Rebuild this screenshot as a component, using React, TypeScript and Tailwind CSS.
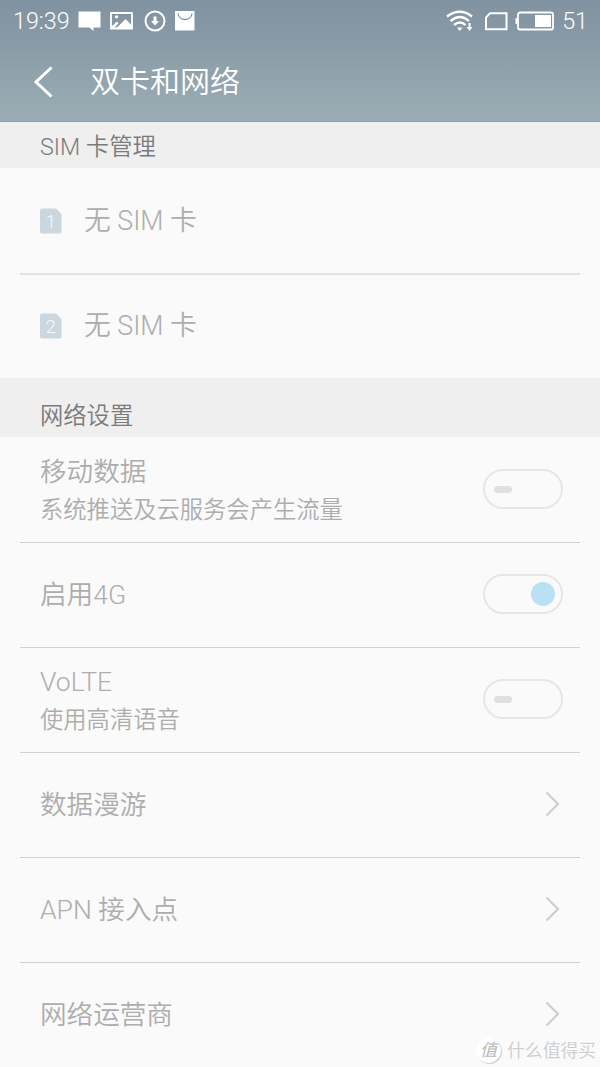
import type { ReactNode } from "react";

function StatusBar() {
  return (
    <div className="flex h-[42px] items-center pl-[13px] pr-[12px] text-[23.3px] text-white">
      <span className="w-[65px] pt-[2px] leading-none">19:39</span>
      <svg className="h-[22px] w-[118px]" viewBox="0 0 118 22" fill="none">
        <path d="M0.500 1.500h22v16h-7v3.500l-4-3.500H.500z" fill="white" />
        <path d="M33 3h21v15.500H33z" stroke="white" strokeWidth="1.800" />
        <path d="M34 16l5-4.500 1.500 1.500-4 5H34zM38.500 18l9-9 6.500 6.500V18z" fill="white" />
        <circle cx="38.500" cy="6.800" r="1.600" fill="white" />
        <circle cx="77" cy="11" r="9.500" stroke="white" strokeWidth="2" />
        <path d="M75.500 6.500h3v4.500h2.500l-4 4.500-4-4.500h2.500z" fill="white" />
        <path d="M97 1h19.500v19.500H97z" fill="white" />
        <path d="M100 3.500c1 8 13 8 14 0" stroke="#84949f" strokeWidth="1.300" />
      </svg>
      <svg className="ml-auto h-[24px] w-[110px]" viewBox="0 0 110 24" fill="none" stroke="white">
        <path d="M2 7.500Q15 -2 27 7.500M5.500 12Q15 4 24 12M9 16Q15 11 20.500 16" strokeWidth="2.300" />
        <path d="M12 18.500h5.500L14.700 22z" fill="white" stroke="none" />
        <path d="M24.500 14v5" strokeWidth="2" />
        <path d="M21.500 18h6l-3 4z" fill="white" stroke="none" />
        <path d="M45 4.200h16.500v16H41V8.700z" strokeWidth="2" />
        <rect x="73" y="3.500" width="35" height="17" rx="2" strokeWidth="1.800" />
        <path d="M71.500 9v6" strokeWidth="2" />
        <path d="M90 6h16v12H90z" fill="white" stroke="none" />
      </svg>
      <span className="ml-[7px] pt-[2px] leading-none">51</span>
    </div>
  );
}

function Header() {
  return (
    <header className="h-[122px] border-b border-[#8d9ea5] bg-linear-to-b from-[#8091a0] to-[#9badb4]">
      <StatusBar />
      <div className="flex h-[79px] items-center pl-[33px]">
        <svg className="h-[32px] w-[20px]" viewBox="0 0 20 32" fill="none">
          <path d="M18.500 1.500L3 16l15.500 14.500" stroke="white" strokeWidth="3" />
        </svg>
        <h1 className="ml-[37px] text-[30px] leading-none font-[350] text-white">双卡和网络</h1>
      </div>
    </header>
  );
}

function SimRow({ slot }: { slot: number }) {
  return (
    <div className="flex h-full items-center pl-5">
      <svg className="h-[26px] w-[22px]" viewBox="0 0 22 26">
        <path d="M2 .5h14L21.500 6v17.500q0 2-2 2H2q-2 0-2-2v-21q0-2 2-2z" fill="#cad7df" />
        <text x="10.800" y="19.500" textAnchor="middle" fontSize="18" fill="#fafafa">
          {slot}
        </text>
      </svg>
      <span className="ml-[22px] pt-px text-[26.8px] leading-none">无 SIM 卡</span>
    </div>
  );
}

function Toggle({ on = false }: { on?: boolean }) {
  return (
    <div
      className={`flex h-10 w-20 items-center rounded-full border-2 border-[#e6e6e6] ${
        on ? "justify-end pr-[6px]" : "pl-[9px]"
      }`}
    >
      {on ? (
        <span className="size-6 rounded-full bg-[#b9e0f3]" />
      ) : (
        <span className="h-[7px] w-[18px] rounded-full bg-[#e0e0e0]" />
      )}
    </div>
  );
}

function Chevron() {
  return (
    <svg className="mr-[3px] h-[26px] w-[15px]" viewBox="0 0 15 26" fill="none">
      <path d="M1.500 1.500L13 13 1.500 24.500" stroke="#cecece" strokeWidth="2.200" />
    </svg>
  );
}

interface SettingRowProps {
  title: string;
  summary?: string;
  children: ReactNode;
}

function SettingRow({ title, summary, children }: SettingRowProps) {
  return (
    <div className="flex h-[105px] items-center justify-between border-t border-[#d0d0d0] pb-[2px] pl-5 pr-[17px] first:border-transparent">
      <div className={summary ? "pt-[4px]" : "pt-[2px]"}>
        <div className="text-[26.6px] leading-[38px]">{title}</div>
        {summary && <div className="text-[23.3px] leading-[38px]">{summary}</div>}
      </div>
      {children}
    </div>
  );
}

function Watermark() {
  return (
    <div className="absolute bottom-[4px] right-[4px] flex items-center text-[#cfcfcf] [text-shadow:-1px_-1px_0_white]">
      <span className="flex size-[25px] items-center justify-center rounded-full bg-white text-[17px] leading-none font-normal text-[#b8b8b8] italic shadow-[1px_1px_1px_#ccc]">
        值
      </span>
      <span className="ml-[6px] text-[17.8px] leading-none font-normal">什么值得买</span>
    </div>
  );
}

export default function App() {
  return (
    <div className="relative h-[1067px] w-[600px] overflow-hidden bg-[#fafafa] font-['Roboto','Noto_Sans_CJK_SC',sans-serif] font-[350] text-[#adadad]">
      <Header />

      <h2 className="flex h-[46px] items-center bg-[#efefef] pl-10 pt-[5px] text-[23.3px] text-[#7a7a7a]">
        SIM 卡管理
      </h2>
      <div className="mx-5">
        <div className="h-[107px] border-b-2 border-[#e2e2e2] pt-px">
          <SimRow slot={1} />
        </div>
        <div className="h-[103px] pb-px">
          <SimRow slot={2} />
        </div>
      </div>

      <h2 className="flex h-[59px] items-center bg-[#efefef] pl-10 pt-[18px] text-[23.3px] text-[#7a7a7a]">
        网络设置
      </h2>
      <div className="mx-5">
        <SettingRow title="移动数据" summary="系统推送及云服务会产生流量">
          <Toggle />
        </SettingRow>
        <SettingRow title="启用4G">
          <Toggle on />
        </SettingRow>
        <SettingRow title="VoLTE" summary="使用高清语音">
          <Toggle />
        </SettingRow>
        <SettingRow title="数据漫游">
          <Chevron />
        </SettingRow>
        <SettingRow title="APN 接入点">
          <Chevron />
        </SettingRow>
        <SettingRow title="网络运营商">
          <Chevron />
        </SettingRow>
      </div>

      <Watermark />
    </div>
  );
}
